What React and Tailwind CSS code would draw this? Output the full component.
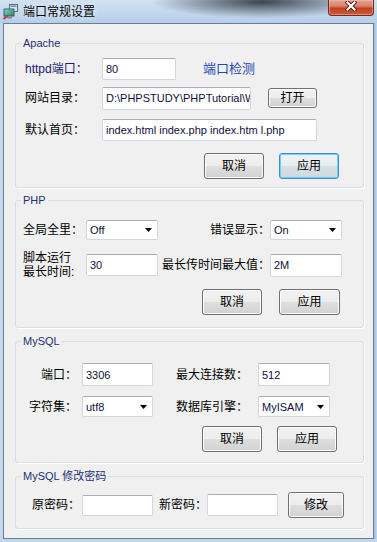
import React from "react";

function AppIcon() {
  return (
    <svg width="17" height="17" viewBox="0 0 17 17" className="ml-[2px] mt-[3px] shrink-0">
      <defs>
        <linearGradient id="scr" x1="0" y1="0" x2="1" y2="1">
          <stop offset="0" stopColor="#6fd0f0" />
          <stop offset="1" stopColor="#2f8f3a" />
        </linearGradient>
      </defs>
      <rect x="7.5" y="1.5" width="8" height="7" fill="#dfe7ee" stroke="#5a6c80" />
      <rect x="8.5" y="2.5" width="6" height="1.5" fill="#6a8fb8" />
      <rect x="1.5" y="5.5" width="11" height="8" rx="0.5" fill="#4b5a6a" />
      <rect x="2.5" y="6.5" width="9" height="6" fill="url(#scr)" />
      <rect x="5" y="13.5" width="5" height="2" fill="#7c8a98" />
      <path d="M1.5 16 L5.5 12.5" stroke="#c0392b" strokeWidth="2" />
    </svg>
  );
}

function CloseBtn() {
  return (
    <div className="ml-auto mr-[3px] w-[46px] h-[16px] shrink-0 rounded-b-[4px] border border-t-0 border-[#6d2b22] bg-[linear-gradient(to_bottom,#e4a291_0%,#d9836f_40%,#c4411f_55%,#cf5a38_100%)] shadow-[inset_0_0_0_1px_rgba(255,200,190,0.45)] flex items-start justify-center pt-[1px]">
      <svg width="12" height="10" viewBox="0 0 12 10">
        <path d="M2.5 1.5 L9.5 8.5 M9.5 1.5 L2.5 8.5" stroke="#4a1810" strokeWidth="4" strokeLinecap="square" />
        <path d="M2.5 1.5 L9.5 8.5 M9.5 1.5 L2.5 8.5" stroke="#ffffff" strokeWidth="2.2" strokeLinecap="square" />
      </svg>
    </div>
  );
}

function TextBox({ className = "", children }) {
  return (
    <div
      className={`shrink-0 flex items-center overflow-hidden whitespace-nowrap bg-white border border-[#d3d6dc] border-t-[#a9adb4] rounded-[2px] pl-[3px] text-[11px] text-[#10103a] ${className}`}
    >
      {children}
    </div>
  );
}

function Combo({ className = "", value }) {
  return (
    <div
      className={`shrink-0 flex items-center justify-between bg-white border border-[#d3d6dc] border-t-[#a9adb4] rounded-[2px] pl-[3px] pr-[5px] text-[11px] text-[#10103a] ${className}`}
    >
      <span>{value}</span>
      <svg width="7" height="4" viewBox="0 0 7 4">
        <path d="M0 0 H7 L3.5 4 Z" fill="#000" />
      </svg>
    </div>
  );
}

function Btn({ className = "", focus = false, children }) {
  return (
    <div
      className={`shrink-0 flex items-center justify-center rounded-[3px] border text-[12px] text-black ${
        focus
          ? "border-[#3c8fd0] bg-[linear-gradient(to_bottom,#eef3f6_0%,#e6ecf0_50%,#d9e1e6_50%,#cfd8de_100%)] shadow-[inset_0_0_0_1px_#6fd0f4]"
          : "border-[#707070] bg-[linear-gradient(to_bottom,#f3f3f3_0%,#ececec_50%,#dfdfdf_50%,#d2d2d2_100%)] shadow-[inset_0_0_0_1px_#fbfbfb]"
      } ${className}`}
    >
      {children}
    </div>
  );
}

function Group({ title, className = "", children }) {
  return (
    <div className={`relative w-[349px] shrink-0 border border-[#d5dfe5] rounded-[3px] shadow-[1px_1px_0_#ffffff] ${className}`}>
      <span className="absolute left-[5px] top-[-8px] bg-[#f0f0f0] px-[2px] leading-[14px] text-[11px] text-[#1e3170] whitespace-nowrap">
        {title}
      </span>
      {children}
    </div>
  );
}

export default function App() {
  return (
    <div className="w-[377px] h-[542px] overflow-hidden flex flex-col bg-[linear-gradient(to_bottom,#bcd3eb,#b4cde7)] font-['Liberation_Sans','Noto_Sans_CJK_SC',sans-serif] text-[12px] leading-[14px] text-black">
      {/* Title bar */}
      <div className="h-[23px] shrink-0 flex items-start bg-[image:radial-gradient(ellipse_110px_16px_at_262px_2px,rgba(50,60,72,0.95),rgba(50,60,72,0)),linear-gradient(to_bottom,#d2e2f2,#b6cee8)]">
        <AppIcon />
        <span className="ml-[4px] mt-[4px] text-[12px] leading-[14px] text-black font-['Noto_Sans_CJK_SC',sans-serif] [text-shadow:0_0_6px_rgba(255,255,255,0.95)]">
          端口常规设置
        </span>
        <CloseBtn />
      </div>

      {/* Body */}
      <div className="flex-1 flex min-h-0">
        <div className="w-[3px] shrink-0 bg-[#c3d8ee]" />
        <div className="w-[371px] shrink-0 border border-[#6b7d92] bg-[#f0f0f0] pl-[11px] pt-[19px] flex flex-col">
          {/* Apache */}
          <Group title="Apache" className="h-[145px]">
            <div className="pt-[14px] pl-[9px] flex flex-col">
              <div className="flex items-center h-[22px]">
                <div className="w-[77px] shrink-0 text-[#1b1b6e]">
                  <span className="text-[12px]">httpd</span>端口：
                </div>
                <TextBox className="w-[74px] h-[22px]">80</TextBox>
                <span className="ml-[27px] text-[13px] text-[#2447b8]">端口检测</span>
              </div>
              <div className="flex items-center h-[22px] mt-[7px]">
                <div className="w-[77px] shrink-0">网站目录：</div>
                <TextBox className="w-[149px] h-[23px]">D:\PHPSTUDY\PHPTutorial\WWW</TextBox>
                <Btn className="ml-[17px] w-[49px] h-[20px]">打开</Btn>
              </div>
              <div className="flex items-center h-[22px] mt-[10px]">
                <div className="w-[77px] shrink-0">默认首页：</div>
                <TextBox className="w-[215px] h-[22px]">index.html index.php index.htm l.php</TextBox>
              </div>
              <div className="flex items-center mt-[12px] pl-[179px] gap-[15px]">
                <Btn className="w-[60px] h-[26px]">取消</Btn>
                <Btn focus className="w-[60px] h-[26px]">应用</Btn>
              </div>
            </div>
          </Group>

          {/* PHP */}
          <Group title="PHP" className="h-[128px] mt-[12px]">
            <div className="pt-[19px] pl-[7px] flex flex-col">
              <div className="flex items-center h-[20px]">
                <div className="w-[63px] shrink-0">全局全里：</div>
                <Combo className="w-[72px] h-[20px]" value="Off" />
                <div className="w-[112px] shrink-0 text-right">错误显示：</div>
                <Combo className="w-[72px] h-[20px]" value="On" />
              </div>
              <div className="flex items-center h-[28px] mt-[11px]">
                <div className="w-[63px] shrink-0 leading-[14px]">
                  脚本运行
                  <br />
                  最长时间:
                </div>
                <TextBox className="w-[72px] h-[22px]">30</TextBox>
                <div className="w-[112px] shrink-0 text-right">最长传时间最大值：</div>
                <TextBox className="w-[72px] h-[23px]">2M</TextBox>
              </div>
              <div className="flex items-center mt-[10px] pl-[179px] gap-[17px]">
                <Btn className="w-[60px] h-[26px]">取消</Btn>
                <Btn className="w-[61px] h-[26px]">应用</Btn>
              </div>
            </div>
          </Group>

          {/* MySQL */}
          <Group title="MySQL" className="h-[122px] mt-[13px]">
            <div className="pt-[21px] flex flex-col">
              <div className="flex items-center h-[23px]">
                <div className="w-[66px] shrink-0 text-right pr-[5px]">端口：</div>
                <TextBox className="w-[71px] h-[23px]">3306</TextBox>
                <div className="w-[105px] shrink-0 text-right pr-[10px]">最大连接数：</div>
                <TextBox className="w-[72px] h-[23px]">512</TextBox>
              </div>
              <div className="flex items-center h-[21px] mt-[10px]">
                <div className="w-[66px] shrink-0 text-right pr-[5px]">字符集：</div>
                <Combo className="w-[71px] h-[21px]" value="utf8" />
                <div className="w-[105px] shrink-0 text-right pr-[10px]">数据库引擎：</div>
                <Combo className="w-[72px] h-[21px]" value="MyISAM" />
              </div>
              <div className="flex items-center mt-[9px] pl-[186px] gap-[15px]">
                <Btn className="w-[60px] h-[26px]">取消</Btn>
                <Btn className="w-[60px] h-[26px]">应用</Btn>
              </div>
            </div>
          </Group>

          {/* MySQL password */}
          <Group title="MySQL 修改密码" className="h-[53px] mt-[13px]">
            <div className="pt-[15px] pl-[16px] flex items-center h-[41px]">
              <div className="w-[50px] shrink-0">原密码：</div>
              <TextBox className="w-[71px] h-[21px]" />
              <div className="ml-[6px] w-[48px] shrink-0">新密码：</div>
              <TextBox className="w-[71px] h-[22px]" />
              <Btn className="ml-[10px] w-[56px] h-[26px]">修改</Btn>
            </div>
          </Group>
        </div>
        <div className="flex-1 bg-[linear-gradient(to_right,#9fb9d6,#c4d9ee)]" />
      </div>
      <div className="h-[3px] shrink-0 bg-[#c0d6ec]" />
    </div>
  );
}
